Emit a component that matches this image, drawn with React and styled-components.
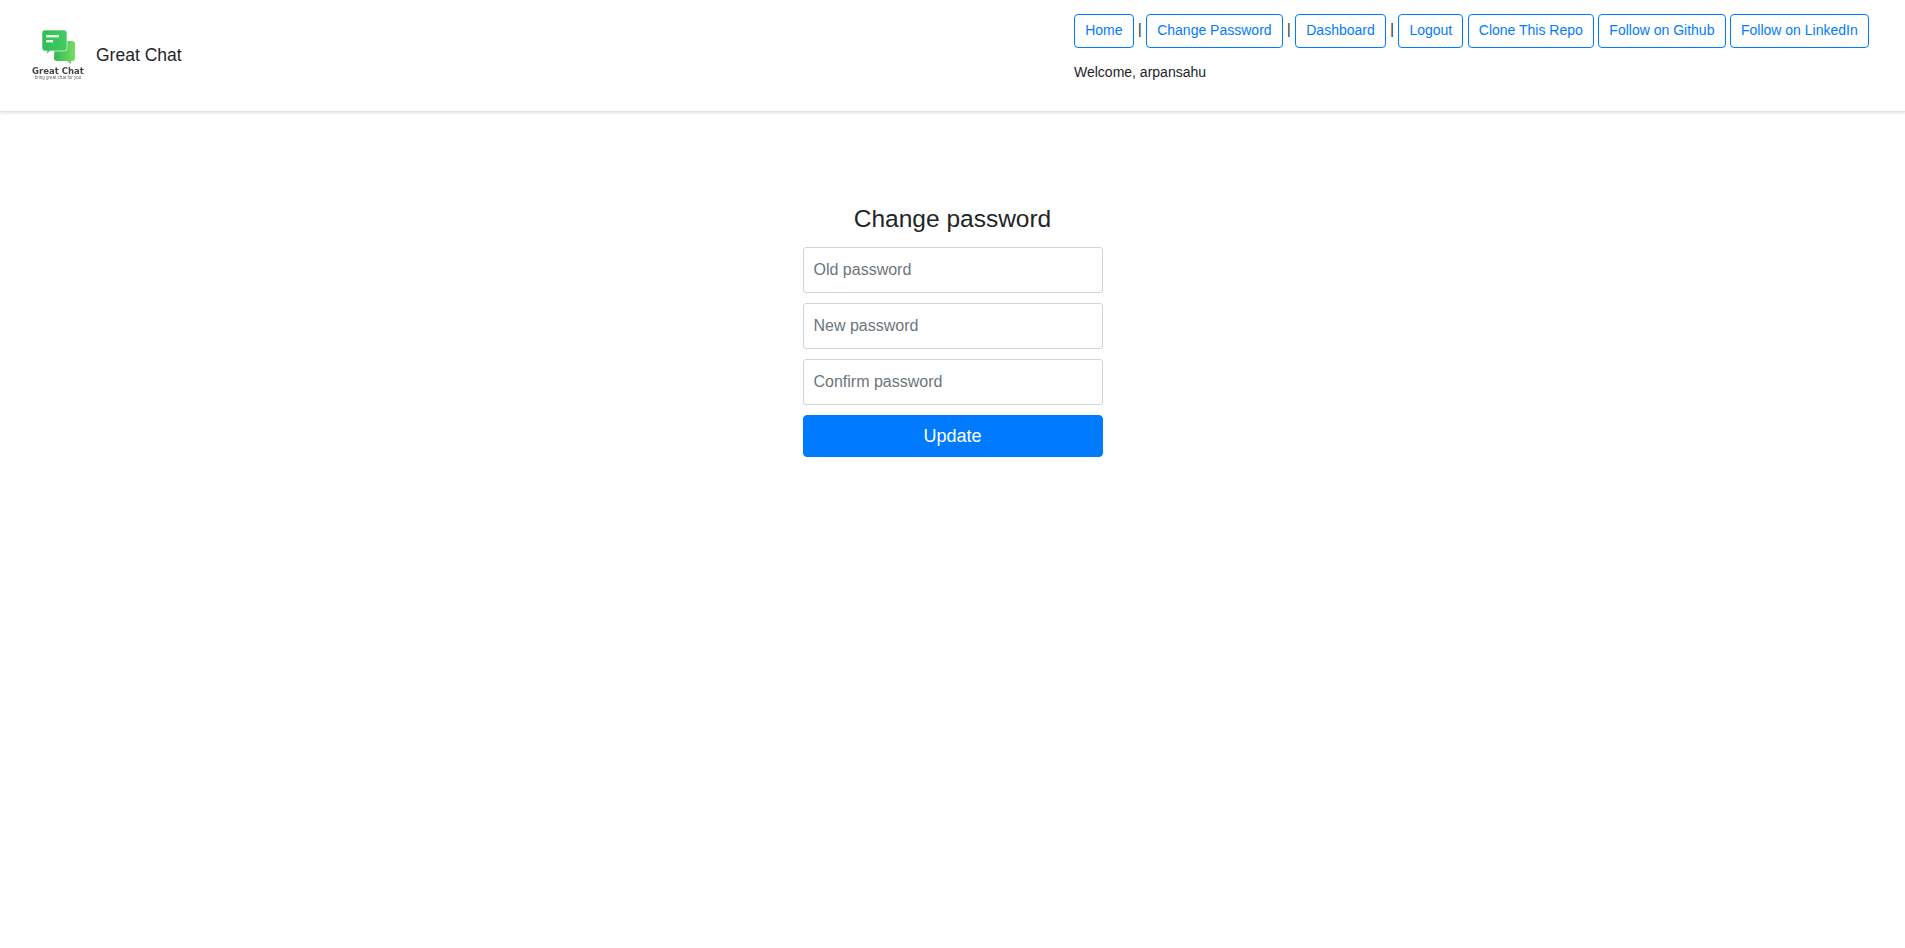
import styled, { createGlobalStyle } from "styled-components";

const GlobalStyle = createGlobalStyle`
    * {
        box-sizing: border-box;
    }

    body {
        margin: 0;
        background: #fff;
        color: #212529;
        font-family: "Liberation Sans", Arial, sans-serif;
        font-size: 16px;
        line-height: 1.5;
    }
`

const Header = styled.header`
    display: flex;
    justify-content: space-between;
    height: 112px;
    padding: 14px 35px 0 30px;
    border-bottom: 1px solid #dee2e6;
    box-shadow: 0 1px 3px rgba(0, 0, 0, 0.12);
`

const Brand = styled.a`
    display: flex;
    align-items: center;
    align-self: flex-start;
    gap: 10px;
    margin-top: 13px;
    color: #212529;
    font-size: 17.5px;
`

const LogoImage = styled.svg`
    filter: blur(0.35px);
`

const Nav = styled.nav`
    display: flex;
    flex-direction: column;
    width: 796px;
`

const Links = styled.div`
    display: flex;
    align-items: center;
    gap: 4.2px;
`

const NavButton = styled.a`
    display: block;
    padding: 5.35px 10.2px;
    border: 1px solid #007bff;
    border-radius: 4px;
    color: #007bff;
    font-size: 14px;
    line-height: 21px;
    white-space: nowrap;
`

const Separator = styled.span`
    width: 3.9px;
    margin-top: -2px;
    font-size: 14px;
    line-height: 21px;
    text-align: center;
`

const Welcome = styled.div`
    margin-top: 14.6px;
    font-size: 14px;
    line-height: 21px;
`

const Main = styled.main`
    display: flex;
    justify-content: center;
    padding-top: 87px;
`

const Form = styled.form`
    display: flex;
    flex-direction: column;
    width: 300px;
`

const Title = styled.h1`
    margin: 0 0 9px;
    font-size: 24.5px;
    font-weight: 400;
    line-height: 39px;
    text-align: center;
`

const Input = styled.input`
    height: 46px;
    margin-bottom: 10px;
    padding: 0 10px;
    border: 1px solid #ced4da;
    border-radius: 3px;
    color: #495057;
    font-family: inherit;
    font-size: 16px;

    &::placeholder {
        color: #6c757d;
        opacity: 1;
    }
`

const Submit = styled.button`
    height: 42px;
    border: 1px solid #007bff;
    border-radius: 4px;
    background: #007bff;
    color: #fff;
    font-family: inherit;
    font-size: 18px;
`

function Logo() {
    return (
        <LogoImage width="56" height="56" viewBox="0 -1 56 56">
            <defs>
                <linearGradient id="front" x1="0" x2="1">
                    <stop offset="0" stopColor="#2fbd58" />
                    <stop offset="1" stopColor="#45cb60" />
                </linearGradient>
                <linearGradient id="back" x1="0" x2="1">
                    <stop offset="0" stopColor="#34b658" />
                    <stop offset="1" stopColor="#74df5e" />
                </linearGradient>
            </defs>
            <path d="M25 13h17a3 3 0 0 1 3 3v14a3 3 0 0 1-3 3h-1v3l-4-3H27a3 3 0 0 1-3-3z" fill="url(#back)" />
            <path d="M15 2h19a3 3 0 0 1 3 3v15a3 3 0 0 1-3 3H20l-3 3v-3h-2a3 3 0 0 1-3-3V5a3 3 0 0 1 3-3z" fill="url(#front)" stroke="#fff" strokeWidth="0.6" />
            <rect x="16" y="7" width="13" height="2.4" fill="#e8f8ea" />
            <rect x="16" y="12" width="7" height="2.4" fill="#e8f8ea" />
            <text x="28" y="46" textAnchor="middle" fontFamily="'DejaVu Sans', sans-serif" fontSize="8.5" fontWeight="700" fill="#444">Great Chat</text>
            <text x="28" y="51" textAnchor="middle" fontFamily="'Liberation Sans', sans-serif" fontSize="4.5" fill="#666">bring great chat for you</text>
        </LogoImage>
    )
}

function App() {
    return (
        <>
            <GlobalStyle />
            <Header>
                <Brand>
                    <Logo />
                    Great Chat
                </Brand>
                <Nav>
                    <Links>
                        <NavButton>Home</NavButton>
                        <Separator>|</Separator>
                        <NavButton>Change Password</NavButton>
                        <Separator>|</Separator>
                        <NavButton>Dashboard</NavButton>
                        <Separator>|</Separator>
                        <NavButton>Logout</NavButton>
                        <NavButton>Clone This Repo</NavButton>
                        <NavButton>Follow on Github</NavButton>
                        <NavButton>Follow on LinkedIn</NavButton>
                    </Links>
                    <Welcome>Welcome, arpansahu</Welcome>
                </Nav>
            </Header>
            <Main>
                <Form>
                    <Title>Change password</Title>
                    <Input type="password" placeholder="Old password" />
                    <Input type="password" placeholder="New password" />
                    <Input type="password" placeholder="Confirm password" />
                    <Submit type="button">Update</Submit>
                </Form>
            </Main>
        </>
    )
}

export default App;
